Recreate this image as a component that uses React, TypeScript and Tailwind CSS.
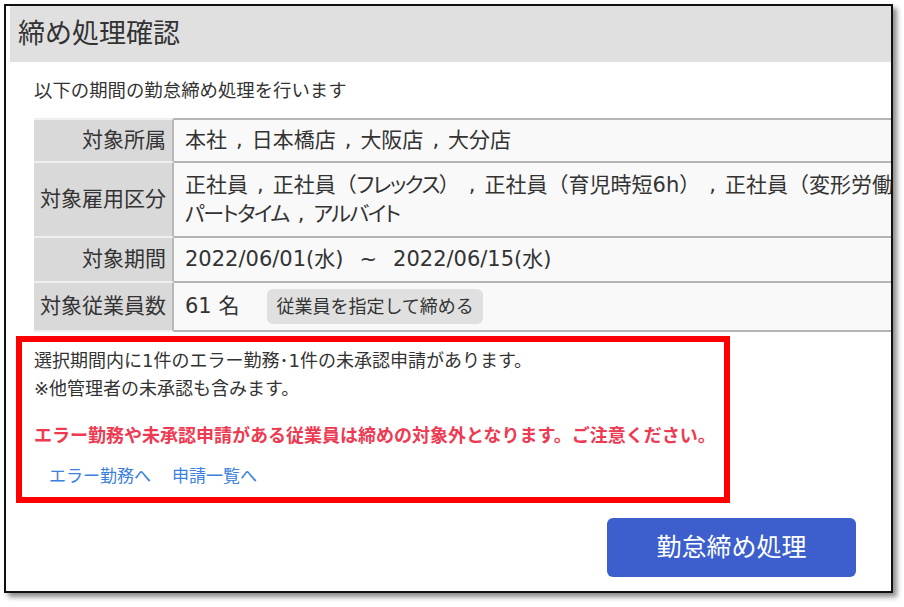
import React from 'react';

const Sep = () => <span className="mx-[9px]">,</span>;

// katakana in the original font is proportional, so tighten it
const Kana: React.FC<{ children: React.ReactNode }> = ({ children }) => (
  <span className="[font-feature-settings:'palt'] tracking-[-1.5px]">{children}</span>
);

const joinItems = (items: React.ReactNode[]) =>
  items.map((item, i) => (
    <React.Fragment key={i}>
      {i > 0 && <Sep />}
      {item}
    </React.Fragment>
  ));

const InfoRow: React.FC<{ label: string; height: string; first?: boolean; children: React.ReactNode }> = ({
  label,
  height,
  first,
  children,
}) => (
  <div className={`flex ${height}`}>
    <div
      className={`w-[140px] shrink-0 flex items-center justify-end pr-[6px] bg-[#d9d9d9] border-b-2 border-[#efefef] border-r-2 border-r-[#b8b8b8] ${
        first ? 'border-t-2 border-t-[#efefef]' : ''
      }`}
    >
      {label}
    </div>
    <div
      className={`flex-1 flex items-center pl-[11px] bg-[#f9f9f9] border-b-2 border-[#b4b4b4] ${
        first ? 'border-t-2 border-t-[#b4b4b4]' : ''
      }`}
    >
      {children}
    </div>
  </div>
);

export default function App() {
  return (
    <div className="w-[904px] h-[607px] bg-white pt-[4px] pl-[4px] font-['DejaVu_Sans','Noto_Sans_CJK_JP',sans-serif] text-[#333]">
      <div className="w-[889px] h-[589px] border-2 border-[#111] bg-white overflow-hidden flex flex-col shadow-[4px_4px_5px_rgba(0,0,0,0.45)]">
        <div className="ml-[4px] h-[56px] shrink-0 bg-[#e0e0e0] flex items-center pl-[8px] text-[27px] text-[#333]">
          締め処理確認
        </div>

        <p className="ml-[28px] mt-[16px] text-[18.4px] leading-[26px]">以下の期間の勤怠締め処理を行います</p>

        <div className="ml-[28px] mt-[14px] w-[1000px] shrink-0 text-[21px]">
          <InfoRow label="対象所属" height="h-[45px]" first>
            {joinItems(['本社', '日本橋店', '大阪店', '大分店'])}
          </InfoRow>
          <InfoRow label="対象雇用区分" height="h-[75px]">
            <div className="leading-[29px]">
              <div className="whitespace-nowrap">
                {joinItems([
                  '正社員',
                  <>正社員（<Kana>フレックス</Kana>）</>,
                  '正社員（育児時短6h）',
                  '正社員（変形労働時間制）',
                ])}
              </div>
              <div className="whitespace-nowrap">
                {joinItems([<Kana>パートタイム</Kana>, <Kana>アルバイト</Kana>])}
              </div>
            </div>
          </InfoRow>
          <InfoRow label="対象期間" height="h-[45px]">
            <span className="whitespace-nowrap">
              2022/06/01(水)<span className="mx-[16px]">~</span>2022/06/15(水)
            </span>
          </InfoRow>
          <InfoRow label="対象従業員数" height="h-[49px]">
            <span className="whitespace-nowrap">61 名</span>
            <button className="ml-[28px] h-[35px] px-[9px] rounded-[6px] bg-[#e0e0e0] text-[18px] text-[#333]">
              従業員を指定して締める
            </button>
          </InfoRow>
        </div>

        <div className="ml-[10px] mt-[4px] w-[714px] h-[167px] shrink-0 border-[6px] border-[#ff0000] pl-[12px] pt-[5px] text-[18px]">
          <p className="leading-[28px]">選択期間内に1件のエラー勤務･1件の未承認申請があります。</p>
          <p className="leading-[28px]">※他管理者の未承認も含みます。</p>
          <p className="mt-[19px] leading-[28px] font-bold text-[#ee3a52]">
            エラー勤務や未承認申請がある従業員は締めの対象外となります。ご注意ください。
          </p>
          <div className="mt-[12px] ml-[15px] flex gap-[21px] text-[17px] leading-[28px] text-[#3a80dc]">
            <a href="#">エラー勤務へ</a>
            <a href="#">申請一覧へ</a>
          </div>
        </div>

        <div className="mt-[15px] flex justify-end pr-[35px]">
          <button className="w-[249px] h-[59px] rounded-[6px] bg-[#3c5fcd] text-white text-[25px]">勤怠締め処理</button>
        </div>
      </div>
    </div>
  );
}
